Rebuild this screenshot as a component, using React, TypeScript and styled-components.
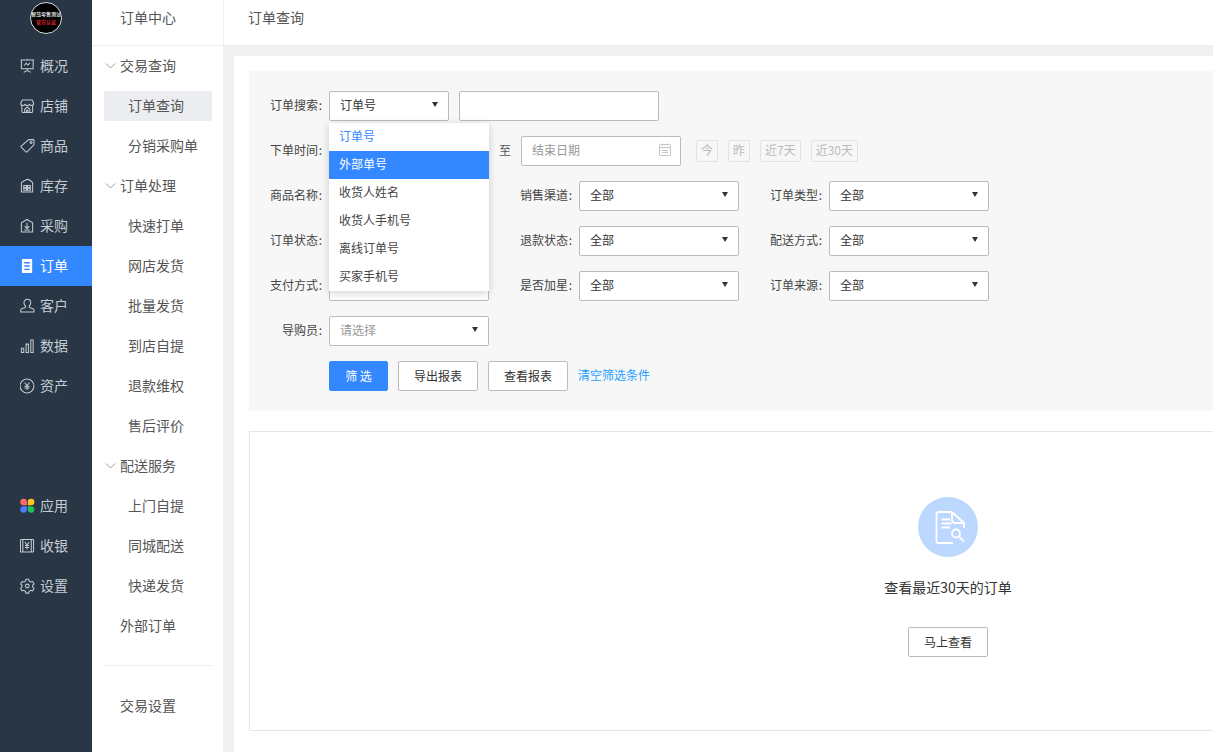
import { ReactNode } from "react";
import { styled, createGlobalStyle } from "styled-components";

const GlobalStyle = createGlobalStyle`
  html, body {
    margin: 0;
    padding: 0;
    height: 100%;
    overflow: hidden;
    background: #fff;
    font-family: "Noto Sans CJK SC", "Liberation Sans", sans-serif;
    color: #333;
  }
  * { box-sizing: border-box; }
`;

const Svg = ({ children }: { children: ReactNode }) => (
  <svg width="16" height="16" viewBox="0 0 16 16" fill="none" stroke="currentColor" strokeWidth="1.1">
    {children}
  </svg>
);

const railTop = [
  {
    name: "概况",
    icon: (
      <Svg>
        <path d="M.5 1.500h14.500M1.500 1.500v9.500h12.500v-9.500M7.800 .5v1M7.800 11v2M4 14.800l3.800-2 3.800 2M4.500 7.500l2-2.500 2 2 2-2.500" />
      </Svg>
    ),
  },
  {
    name: "店铺",
    icon: (
      <Svg>
        <path d="M2.500 1.500h10.500l1.500 3.500c0 1.500-1 2.500-2.200 2.500-1 0-1.800-.5-2.300-1.200-.5.7-1.300 1.200-2.300 1.200S5.900 7 5.400 6.300C4.900 7 4.100 7.500 3 7.500 1.800 7.500.8 6.500.8 5zM2 7.500v6a1.500 1.500 0 0 0 1.500 1.500h8.500a1.500 1.500 0 0 0 1.500-1.500v-6M5 15v-3.500L7.700 9l2.800 2.500V15M7 15v-2.500h1.500V15" />
      </Svg>
    ),
  },
  {
    name: "商品",
    icon: (
      <Svg>
        <path d="M9.300 1.200h5a.6.6 0 0 1 .6.6v5L7.500 14.300a.8.8 0 0 1-1.100 0L1.200 9.200a.8.8 0 0 1 0-1.100zM11.800 3.300a1 1 0 1 0 .01 0z" />
      </Svg>
    ),
  },
  {
    name: "库存",
    icon: (
      <Svg>
        <path d="M1.500 4.500C3 3 5.500 1.500 7.500 1S12 3 13.500 4.500v10h-12zM4 7.500h3v2H4zM8 7.500h3v2H8zM4 10.500h3v2H4zM8 10.500h3v2H8z" />
      </Svg>
    ),
  },
  {
    name: "采购",
    icon: (
      <Svg>
        <path d="M1.500 4.500L7.500 1l6 3.500v10h-12zM7.500 4.500v6M5 8.200l2.500 2.500L10 8.200M4.500 12.300h6" />
      </Svg>
    ),
  },
  {
    name: "订单",
    active: true,
    icon: (
      <Svg>
        <path d="M2 .5h11v15H2z" fill="currentColor" stroke="none" />
        <path d="M4.500 4.500h6M4.500 8h6M4.500 11.500h6" stroke="#3388ff" strokeWidth="1.400" />
      </Svg>
    ),
  },
  {
    name: "客户",
    icon: (
      <Svg>
        <path d="M7.800 .8c2.100 0 3.700 1.700 3.700 3.800 0 1.600-.8 2.700-1.600 3.400v1.600l4 1.400c.7.300 1 .8 1 1.500v1.900H.8v-1.900c0-.7.300-1.200 1-1.500l4-1.400V8c-.8-.7-1.600-1.800-1.600-3.400C4.200 2.500 5.700.8 7.800.8z" />
      </Svg>
    ),
  },
  {
    name: "数据",
    icon: (
      <Svg>
        <path d="M1.500 10.500h2.500V15H1.500zM6.500 6h2.500v9H6.500zM11.500 1.500h2.500V15h-2.500z" />
      </Svg>
    ),
  },
  {
    name: "资产",
    icon: (
      <Svg>
        <circle cx="7.500" cy="8" r="7.400" />
        <path d="M5 4.300L7.500 7.800 10 4.300M4.800 8.200h5.400M4.800 10.200h5.400M7.500 7.800v4.500" />
      </Svg>
    ),
  },
];

const railBottom = [
  {
    name: "应用",
    icon: (
      <Svg>
        <path d="M3.800 .3a3.500 3.500 0 0 1 3.500 3.500v3.500H3.800a3.500 3.500 0 0 1 0-7z" fill="#ff6b6b" stroke="none" />
        <path d="M11.800 .3a3.500 3.500 0 0 1 0 7H8.300V3.800a3.500 3.500 0 0 1 3.500-3.500z" fill="#ffc81e" stroke="none" />
        <path d="M3.800 8.300h3.500v3.500a3.500 3.500 0 1 1-3.500-3.500z" fill="#4c7dff" stroke="none" />
        <path d="M8.300 8.300h3.500a3.500 3.500 0 1 1-3.500 3.500z" fill="#21c05c" stroke="none" />
      </Svg>
    ),
  },
  {
    name: "收银",
    icon: (
      <Svg>
        <path d="M1.500 1h12a1 1 0 0 1 1 1v11.500a1 1 0 0 1-1 1h-12a1 1 0 0 1-1-1V2a1 1 0 0 1 1-1zM3 14.500V1M12 14.500V1M5.300 3.800L7.500 7l2.200-3.200M5.300 7.500h4.400M5.300 9.500h4.400M7.500 7v4.500" />
      </Svg>
    ),
  },
  {
    name: "设置",
    icon: (
      <Svg>
        <path d="M6.300.8h3l.5 2 1.700 1 2-.6 1.500 2.600-1.500 1.400v2l1.500 1.400-1.500 2.600-2-.6-1.700 1-.5 2h-3l-.5-2-1.700-1-2 .6L.6 10.600l1.500-1.400v-2L.6 5.800l1.500-2.600 2 .6 1.700-1z" />
        <circle cx="7.800" cy="8" r="2" />
      </Svg>
    ),
  },
];

const quickRanges = ["今", "昨", "近7天", "近30天"];
const dropdownOptions = ["订单号", "外部单号", "收货人姓名", "收货人手机号", "离线订单号", "买家手机号"];

const Chevron = () => (
  <svg width="11" height="6" viewBox="0 0 11 6" fill="none" stroke="#9a9a9a">
    <path d="M1 .5l4.500 4.500L10 .5" />
  </svg>
);

// 드롭다운 아래에 가려지는 셀렉트는 value 없이 박스만 그린다
const Select = ({ value, width, muted }: { value?: string; width?: number; muted?: boolean }) => (
  <SelectBox $width={width}>
    <SelectText $muted={muted}>{value}</SelectText>
    <Caret />
  </SelectBox>
);

const FieldLabel = ({ text }: { text: string }) => (
  <Label>
    {text}
    <Colon>:</Colon>
  </Label>
);

export default function App() {
  return (
    <Page>
      <GlobalStyle />
      <Rail>
        <LogoSlot>
          <Logo>
            <LogoLine>智慧零售测试</LogoLine>
            <LogoLine $red>官方认证</LogoLine>
          </Logo>
        </LogoSlot>
        <RailGroup>
          {railTop.map((item) => (
            <RailItem key={item.name} $active={item.active}>
              <RailIcon>{item.icon}</RailIcon>
              <RailText>{item.name}</RailText>
            </RailItem>
          ))}
        </RailGroup>
        <RailGroup>
          {railBottom.map((item) => (
            <RailItem key={item.name}>
              <RailIcon>{item.icon}</RailIcon>
              <RailText>{item.name}</RailText>
            </RailItem>
          ))}
        </RailGroup>
      </Rail>

      <SideNav>
        <SideTitle>订单中心</SideTitle>
        <SideList>
          <SideGroup>
            <Chevron />
            交易查询
          </SideGroup>
          <SideLink $active>订单查询</SideLink>
          <SideLink>分销采购单</SideLink>
          <SideGroup>
            <Chevron />
            订单处理
          </SideGroup>
          <SideLink>快速打单</SideLink>
          <SideLink>网店发货</SideLink>
          <SideLink>批量发货</SideLink>
          <SideLink>到店自提</SideLink>
          <SideLink>退款维权</SideLink>
          <SideLink>售后评价</SideLink>
          <SideGroup>
            <Chevron />
            配送服务
          </SideGroup>
          <SideLink>上门自提</SideLink>
          <SideLink>同城配送</SideLink>
          <SideLink>快递发货</SideLink>
          <SideGroup>外部订单</SideGroup>
        </SideList>
        <SideFooter>
          <SideGroup>交易设置</SideGroup>
        </SideFooter>
      </SideNav>

      <Main>
        <TopBar>订单查询</TopBar>
        <Content>
          <Panel>
            <FilterBox>
              <Row>
                <Field>
                  <FieldLabel text="订单搜索" />
                  <DropdownAnchor>
                    <Select value="订单号" width={120} />
                    <Dropdown>
                      {dropdownOptions.map((option, i) => (
                        <DropdownItem key={option} $selected={i === 0} $hover={i === 1}>
                          {option}
                        </DropdownItem>
                      ))}
                    </Dropdown>
                  </DropdownAnchor>
                  <TextInput />
                </Field>
              </Row>
              <Row>
                <Field>
                  <FieldLabel text="下单时间" />
                  <DateBox />
                  <DateTo>至</DateTo>
                  <DateBox>
                    结束日期
                    <svg width="12" height="13" viewBox="0 0 12 13" fill="none" stroke="#c4c4c4">
                      <path d="M1.500 1.500h9a1 1 0 0 1 1 1v9a1 1 0 0 1-1 1h-9a1 1 0 0 1-1-1v-9a1 1 0 0 1 1-1zM.5 4.500h11M3.500 .5v2M8.500 .5v2M3 7.500h6M3 9.500h6" />
                    </svg>
                  </DateBox>
                  <QuickRanges>
                    {quickRanges.map((range) => (
                      <QuickRange key={range}>{range}</QuickRange>
                    ))}
                  </QuickRanges>
                </Field>
              </Row>
              <Row>
                <Field>
                  <FieldLabel text="商品名称" />
                  <TextInput $width={160} />
                </Field>
                <Field>
                  <FieldLabel text="销售渠道" />
                  <Select value="全部" />
                </Field>
                <Field>
                  <FieldLabel text="订单类型" />
                  <Select value="全部" />
                </Field>
              </Row>
              <Row>
                <Field>
                  <FieldLabel text="订单状态" />
                  <Select />
                </Field>
                <Field>
                  <FieldLabel text="退款状态" />
                  <Select value="全部" />
                </Field>
                <Field>
                  <FieldLabel text="配送方式" />
                  <Select value="全部" />
                </Field>
              </Row>
              <Row>
                <Field>
                  <FieldLabel text="支付方式" />
                  <Select />
                </Field>
                <Field>
                  <FieldLabel text="是否加星" />
                  <Select value="全部" />
                </Field>
                <Field>
                  <FieldLabel text="订单来源" />
                  <Select value="全部" />
                </Field>
              </Row>
              <Row>
                <Field>
                  <FieldLabel text="导购员" />
                  <Select value="请选择" muted />
                </Field>
              </Row>
              <Actions>
                <PrimaryButton>筛 选</PrimaryButton>
                <Button>导出报表</Button>
                <Button>查看报表</Button>
                <ClearLink>清空筛选条件</ClearLink>
              </Actions>
            </FilterBox>

            <ResultBox>
              <EmptyIcon>
                <svg width="36" height="36" viewBox="0 0 36 36" fill="none" stroke="#fff" strokeWidth="1.800">
                  <path d="M22 3H8.500a2 2 0 0 0-2 2v27a2 2 0 0 0 2 2H23M22 3l12 11v5M22 3v8a3 3 0 0 0 3 3h9M11.500 10.500H20M11.500 14.500h10M11.500 18.500H20" />
                  <circle cx="26" cy="24.500" r="4" />
                  <path d="M29 27.500l5 5" />
                </svg>
              </EmptyIcon>
              <EmptyText>查看最近30天的订单</EmptyText>
              <Button>马上查看</Button>
            </ResultBox>
          </Panel>
        </Content>
      </Main>
    </Page>
  );
}

const Page = styled.div`
  display: flex;
  height: 752px;
  overflow: hidden;
`;

const Rail = styled.aside`
  flex: 0 0 92px;
  background: #283645;
  display: flex;
  flex-direction: column;
`;

const LogoSlot = styled.div`
  height: 46px;
  display: flex;
  justify-content: center;
  padding-top: 2px;
`;

const Logo = styled.div`
  width: 32px;
  height: 32px;
  border-radius: 50%;
  background: #000;
  border: 1px solid #ddd;
  display: flex;
  flex-direction: column;
  align-items: center;
  justify-content: center;
  gap: 2px;
  overflow: hidden;
`;

const LogoLine = styled.span<{ $red?: boolean }>`
  font-size: 5px;
  line-height: 6px;
  white-space: nowrap;
  font-weight: 700;
  color: ${({ $red }) => ($red ? "#e0202a" : "#ddd")};
`;

const RailGroup = styled.nav`
  display: flex;
  flex-direction: column;
  margin-bottom: 80px;
`;

const RailItem = styled.a<{ $active?: boolean }>`
  height: 40px;
  display: flex;
  align-items: center;
  gap: 5px;
  padding-left: 20px;
  font-size: 14px;
  color: ${({ $active }) => ($active ? "#fff" : "#c5ccd3")};
  background: ${({ $active }) => ($active ? "#3388ff" : "transparent")};
`;

const RailIcon = styled.span`
  width: 15px;
  height: 16px;
  display: flex;
  align-items: center;
  justify-content: flex-start;
`;

const RailText = styled.span`
  margin-bottom: 2px;
`;

const SideNav = styled.aside`
  flex: 0 0 132px;
  display: flex;
  flex-direction: column;
  background: #fff;
  border-right: 1px solid #eeeeee;
`;

const SideTitle = styled.div`
  height: 46px;
  padding: 0 0 12px 28px;
  display: flex;
  align-items: center;
  font-size: 14px;
  color: #555;
  border-bottom: 1px solid #eeeeee;
`;

const SideList = styled.div`
  display: flex;
  flex-direction: column;
`;

const SideGroup = styled.div`
  height: 40px;
  position: relative;
  display: flex;
  align-items: center;
  padding: 0 0 2px 28px;
  font-size: 14px;
  color: #555;

  svg {
    position: absolute;
    left: 13px;
    top: 17px;
  }
`;

const SideLink = styled.a<{ $active?: boolean }>`
  height: 30px;
  margin: 5px 11px 5px 12px;
  padding: 0 0 2px 24px;
  display: flex;
  align-items: center;
  font-size: 14px;
  border-radius: 2px;
  color: #555;
  background: ${({ $active }) => ($active ? "#ebedf0" : "transparent")};
`;

const SideFooter = styled.div`
  margin: 19px 11px 0 12px;
  padding-top: 20px;
  border-top: 1px solid #eeeeee;

  ${SideGroup} {
    padding-left: 16px;
  }
`;

const Main = styled.main`
  flex: 1;
  min-width: 0;
  display: flex;
  flex-direction: column;
`;

const TopBar = styled.header`
  height: 46px;
  padding: 0 0 12px 24px;
  display: flex;
  align-items: center;
  font-size: 14px;
  color: #555;
  background: #fff;
  border-bottom: 1px solid #eeeeee;
`;

const Content = styled.div`
  flex: 1;
  padding: 10px 0 0 10px;
  background: #f0f0f0;
`;

const Panel = styled.section`
  width: 1428px;
  height: 100%;
  padding: 15px;
  background: #fff;
`;

const FilterBox = styled.div`
  padding: 20px;
  background: #f7f7f7;
  display: flex;
  flex-direction: column;
  gap: 15px;
`;

const Row = styled.div`
  display: flex;
  gap: 30px;
  height: 30px;
`;

const Field = styled.div`
  display: flex;
  align-items: center;
`;

const Label = styled.label`
  width: 60px;
  padding: 0 6px 4px 0;
  text-align: right;
  font-size: 12px;
  color: #444;
  white-space: nowrap;
`;

const Colon = styled.span`
  display: inline-block;
  width: 5px;
  text-align: center;
`;

const controlBox = `
  height: 30px;
  background: #fff;
  border: 1px solid #bbbbbb;
  border-radius: 2px;
  font-size: 12px;
`;

const DropdownAnchor = styled.div`
  position: relative;
  margin-right: 10px;
`;

const SelectBox = styled.div<{ $width?: number }>`
  ${controlBox}
  width: ${({ $width }) => $width ?? 160}px;
  padding: 0 10px 3px 10px;
  display: flex;
  align-items: center;
  justify-content: space-between;
`;

const SelectText = styled.span<{ $muted?: boolean }>`
  color: ${({ $muted }) => ($muted ? "#999" : "#333")};
`;

const Caret = styled.i`
  width: 0;
  height: 0;
  border-left: 3.5px solid transparent;
  border-right: 3.5px solid transparent;
  border-top: 5px solid #333;
`;

const TextInput = styled.div<{ $width?: number }>`
  ${controlBox}
  width: ${({ $width }) => $width ?? 200}px;
`;

const Dropdown = styled.ul`
  position: absolute;
  top: 32px;
  left: 0;
  width: 160px;
  margin: 0;
  padding: 0;
  list-style: none;
  background: #fff;
  border-radius: 2px;
  box-shadow: 0 2px 8px rgba(0, 0, 0, 0.18);
  z-index: 5;
`;

const DropdownItem = styled.li<{ $selected?: boolean; $hover?: boolean }>`
  height: 28px;
  padding: 0 0 4px 10px;
  display: flex;
  align-items: center;
  font-size: 12px;
  color: ${({ $selected, $hover }) =>
    $hover ? "#fff" : $selected ? "#3388ff" : "#444"};
  background: ${({ $hover }) => ($hover ? "#3388ff" : "#fff")};
`;

const DateBox = styled.div`
  ${controlBox}
  width: 160px;
  padding: 0 9px 3px 10px;
  display: flex;
  align-items: center;
  justify-content: space-between;
  color: #999;
`;

const DateTo = styled.span`
  width: 32px;
  padding-bottom: 4px;
  text-align: center;
  font-size: 12px;
  color: #555;
`;

const QuickRanges = styled.div`
  display: flex;
  gap: 10px;
  margin-left: 15px;
`;

const QuickRange = styled.span`
  height: 22px;
  min-width: 22px;
  padding: 0 4px 3px;
  display: flex;
  align-items: center;
  justify-content: center;
  font-size: 12px;
  color: #bbb;
  border: 1px solid #e3e3e3;
  border-radius: 2px;
`;

const Actions = styled.div`
  display: flex;
  align-items: center;
  gap: 10px;
  height: 30px;
  margin-left: 60px;
`;

const Button = styled.button`
  width: 80px;
  height: 30px;
  padding: 0 0 2px;
  font: 12px "Noto Sans CJK SC", "Liberation Sans", sans-serif;
  color: #333;
  background: #fff;
  border: 1px solid #bbbbbb;
  border-radius: 2px;
`;

const PrimaryButton = styled(Button)`
  width: 59px;
  color: #fff;
  background: #3388ff;
  border-color: #3388ff;
`;

const ClearLink = styled.a`
  font-size: 12px;
  color: #1e9fff;
  margin-top: -4px;
`;

const ResultBox = styled.div`
  margin-top: 20px;
  height: 300px;
  padding-top: 65px;
  border: 1px solid #e5e5e5;
  display: flex;
  flex-direction: column;
  align-items: center;
`;

const EmptyIcon = styled.div`
  width: 60px;
  height: 60px;
  border-radius: 50%;
  background: #bdd8ff;
  display: flex;
  align-items: center;
  justify-content: center;
`;

const EmptyText = styled.p`
  margin: 19px 0 29px;
  font-size: 14px;
  line-height: 22px;
  color: #333;
`;
